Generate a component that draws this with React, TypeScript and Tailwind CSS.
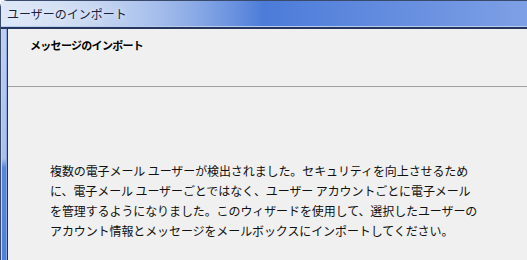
export default function App() {
  const lines = [
    '複数の電子メール ユーザーが検出されました。セキュリティを向上させるため',
    'に、電子メール ユーザーごとではなく、ユーザー アカウントごとに電子メール',
    'を管理するようになりました。このウィザードを使用して、選択したユーザーの',
    'アカウント情報とメッセージをメールボックスにインポートしてください。',
  ];

  return (
    <div
      className="w-[527px] h-[260px] overflow-hidden bg-white flex flex-col"
      style={{ fontFamily: '"Noto Sans CJK JP", "Noto Sans", sans-serif' }}
    >
      {/* Title bar */}
      <div className="h-[29px] shrink-0 rounded-tl-[7px] border-t border-l border-[#3a4a6a] bg-gradient-to-r from-[#c9d7f0] via-[#4c7bd9] to-[#7ea0e5] flex flex-col">
        <div className="flex-1 flex items-center pl-[6px] bg-gradient-to-r from-[#dde7f6] via-[#dde7f6]/0 to-transparent">
          <span className="text-[12px] leading-none text-[#1a2140] [text-shadow:0_0_6px_#ffffff]">
            ユーザーのインポート
          </span>
        </div>
        <div className="h-[1px] bg-[#b9ccef]" />
        <div className="h-[2px] bg-[#25375e]" />
      </div>

      <div className="flex flex-1 min-h-0">
        {/* Left window frame */}
        <div className="w-[8px] shrink-0 flex">
          <div className="w-[1px] bg-[#3a4a6a]" />
          <div className="w-[1px] bg-[#c4d3f0]" />
          <div className="flex-1 bg-[linear-gradient(to_bottom,#bfcfee_0%,#a9bfea_56%,#5a86dc_60%,#4f7fdc_100%)]" />
          <div className="w-[1px] bg-[#8aa8e2]" />
          <div className="w-[1px] bg-[#1f2f55]" />
        </div>

        {/* Client area */}
        <div className="flex-1 bg-[#f0f0f0] flex flex-col">
          <div className="h-[58px] border-b border-[#a0a0a0] pl-[22px] pt-[9px]">
            <div className="text-[11px] font-bold leading-[14px] tracking-[-0.7px] text-black">
              メッセージのインポート
            </div>
          </div>
          <div className="pl-[42px] pt-[74px]">
            {lines.map((l) => (
              <div key={l} className="text-[12px] leading-[20px] tracking-[-0.1px] text-[#111111] whitespace-nowrap">
                {l}
              </div>
            ))}
          </div>
        </div>
      </div>
    </div>
  );
}
